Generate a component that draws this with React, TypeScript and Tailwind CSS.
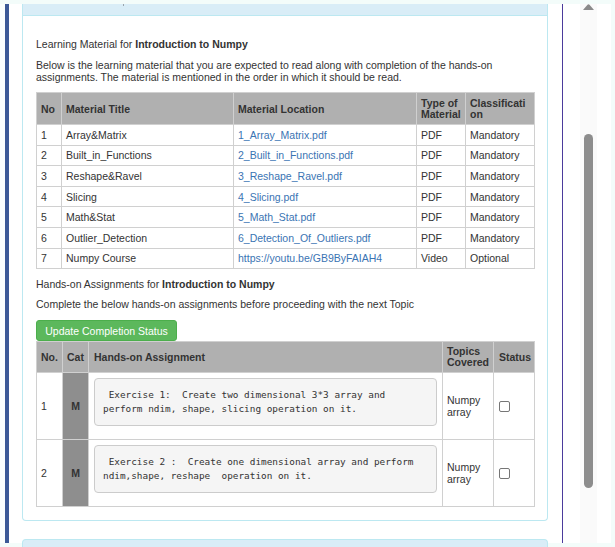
import React from "react";

const rows = [
  ["1", "Array&Matrix", "1_Array_Matrix.pdf", "PDF", "Mandatory"],
  ["2", "Built_in_Functions", "2_Built_in_Functions.pdf", "PDF", "Mandatory"],
  ["3", "Reshape&Ravel", "3_Reshape_Ravel.pdf", "PDF", "Mandatory"],
  ["4", "Slicing", "4_Slicing.pdf", "PDF", "Mandatory"],
  ["5", "Math&Stat", "5_Math_Stat.pdf", "PDF", "Mandatory"],
  ["6", "Outlier_Detection", "6_Detection_Of_Outliers.pdf", "PDF", "Mandatory"],
  ["7", "Numpy Course", "https://youtu.be/GB9ByFAIAH4", "Video", "Optional"],
];

const assignments = [
  {
    no: "1",
    lines: [" Exercise 1:  Create two dimensional 3*3 array and", "perform ndim, shape, slicing operation on it."],
  },
  {
    no: "2",
    lines: [" Exercise 2 :  Create one dimensional array and perform", "ndim,shape, reshape  operation on it."],
  },
];

function Checkbox() {
  return <div className="w-[11px] h-[11px] border border-[#767676] rounded-[2px] bg-white" />;
}

export default function App() {
  return (
    <div className="w-[615px] h-[547px] bg-[#f3fcfa] overflow-hidden font-['Liberation_Sans',Arial,sans-serif] text-[#333]">
      <div className="mt-[4px] h-[539px] flex">
        <div className="w-[5px] bg-[#fbfffe]" />
        <div className="w-[4px] bg-[#3c5a97]" />
        <div className="w-[602px] bg-white flex">
          <div className="w-[553px] pl-[13px] pr-[14px]">
            {/* panel */}
            <div className="border-x border-b border-[#bce8f1] rounded-b-[4px]">
              <div className="h-[12px] bg-[#d9edf7] border-b border-[#bce8f1] relative">
                <div className="absolute left-[100px] top-0 w-[1px] h-[2px] bg-[#9aa4ac]" />
              </div>
              <div className="px-[13px] pt-[22px] pb-[13px] text-[10.5px] leading-[12px]">
                <div>
                  Learning Material for <b>Introduction to Numpy</b>
                </div>
                <div className="mt-[9px]">
                  Below is the learning material that you are expected to read along with completion of the hands-on
                  assignments. The material is mentioned in the order in which it should be read.
                </div>
                <table className="mt-[9px] w-[498px] table-fixed border-collapse">
                  <colgroup>
                    <col className="w-[25px]" />
                    <col className="w-[172px]" />
                    <col className="w-[183px]" />
                    <col className="w-[49px]" />
                    <col className="w-[69px]" />
                  </colgroup>
                  <thead>
                    <tr className="h-[32px] bg-[#b0b0b0] font-bold text-left">
                      <th className="border border-[#d0d0d0] px-[4px] text-left">No</th>
                      <th className="border border-[#d0d0d0] px-[4px] text-left">Material Title</th>
                      <th className="border border-[#d0d0d0] px-[4px] text-left">Material Location</th>
                      <th className="border border-[#d0d0d0] px-[4px] text-left leading-[11px]">
                        Type of
                        <br />
                        Material
                      </th>
                      <th className="border border-[#d0d0d0] px-[4px] text-left leading-[11px]">
                        Classificati
                        <br />
                        on
                      </th>
                    </tr>
                  </thead>
                  <tbody>
                    {rows.map((r) => (
                      <tr key={r[0]} className="h-[20.6px]">
                        <td className="border border-[#d0d0d0] px-[4px]">{r[0]}</td>
                        <td className="border border-[#d0d0d0] px-[4px]">{r[1]}</td>
                        <td className="border border-[#d0d0d0] px-[4px] text-[#3a74b3]">{r[2]}</td>
                        <td className="border border-[#d0d0d0] px-[4px]">{r[3]}</td>
                        <td className="border border-[#d0d0d0] px-[4px]">{r[4]}</td>
                      </tr>
                    ))}
                  </tbody>
                </table>
                <div className="mt-[9px]">
                  Hands-on Assignments for <b>Introduction to Numpy</b>
                </div>
                <div className="mt-[8px]">Complete the below hands-on assignments before proceeding with the next Topic</div>
                <div className="mt-[10px] w-[141px] h-[21px] bg-[#5cb85c] border border-[#4cae4c] rounded-[3px] text-white flex items-center justify-center">
                  Update Completion Status
                </div>
                <table className="w-[498px] table-fixed border-collapse">
                  <colgroup>
                    <col className="w-[26px]" />
                    <col className="w-[26px]" />
                    <col className="w-[354px]" />
                    <col className="w-[51px]" />
                    <col className="w-[41px]" />
                  </colgroup>
                  <thead>
                    <tr className="h-[31px] bg-[#b0b0b0] font-bold">
                      <th className="border border-[#d0d0d0] px-[4px] text-left">No.</th>
                      <th className="border border-[#d0d0d0] px-[4px] text-left">Cat</th>
                      <th className="border border-[#d0d0d0] px-[5px] text-left">Hands-on Assignment</th>
                      <th className="border border-[#d0d0d0] px-[4px] text-left leading-[11px]">
                        Topics
                        <br />
                        Covered
                      </th>
                      <th className="border border-[#d0d0d0] px-[5px] text-left">Status</th>
                    </tr>
                  </thead>
                  <tbody>
                    {assignments.map((a) => (
                      <tr key={a.no} className="h-[66px]">
                        <td className="border border-[#d0d0d0] px-[4px]">{a.no}</td>
                        <td className="border border-[#d0d0d0] bg-[#8e8e8e] text-center font-bold">M</td>
                        <td className="border border-[#d0d0d0] px-[5px] pt-[5px] pb-[13px] align-top">
                          <pre className="m-0 bg-[#f5f5f5] border border-[#cccccc] rounded-[4px] px-[8px] py-[9px] font-['DejaVu_Sans_Mono',monospace] text-[9.4px] leading-[14px] text-[#333] whitespace-pre">
                            {a.lines.join("\n")}
                          </pre>
                        </td>
                        <td className="border border-[#d0d0d0] px-[4px] text-[10.5px] leading-[12px]">
                          Numpy
                          <br />
                          array
                        </td>
                        <td className="border border-[#d0d0d0] px-[5px]">
                          <Checkbox />
                        </td>
                      </tr>
                    ))}
                  </tbody>
                </table>
              </div>
            </div>
            {/* next panel */}
            <div className="mt-[18px] h-[10px] bg-[#d9edf7] border-x border-t border-[#bce8f1] rounded-t-[4px]" />
          </div>
          <div className="w-[1px] bg-[#4b3b9c]" />
          <div className="w-[17px]" />
          <div className="w-[17px] bg-[#fafafa] flex flex-col">
            <svg width="17" height="6" viewBox="0 0 17 6" className="block">
              <path d="M3 6 L7.5 0.8 Q8.5 -0.2 9.5 0.8 L14 6 Z" fill="#8a8a8a" />
            </svg>
            <div className="mt-[124px] ml-[4px] w-[9px] h-[354px] rounded-full bg-[#8d8d8d]" />
          </div>
          <div className="w-[14px]" />
        </div>
      </div>
    </div>
  );
}
